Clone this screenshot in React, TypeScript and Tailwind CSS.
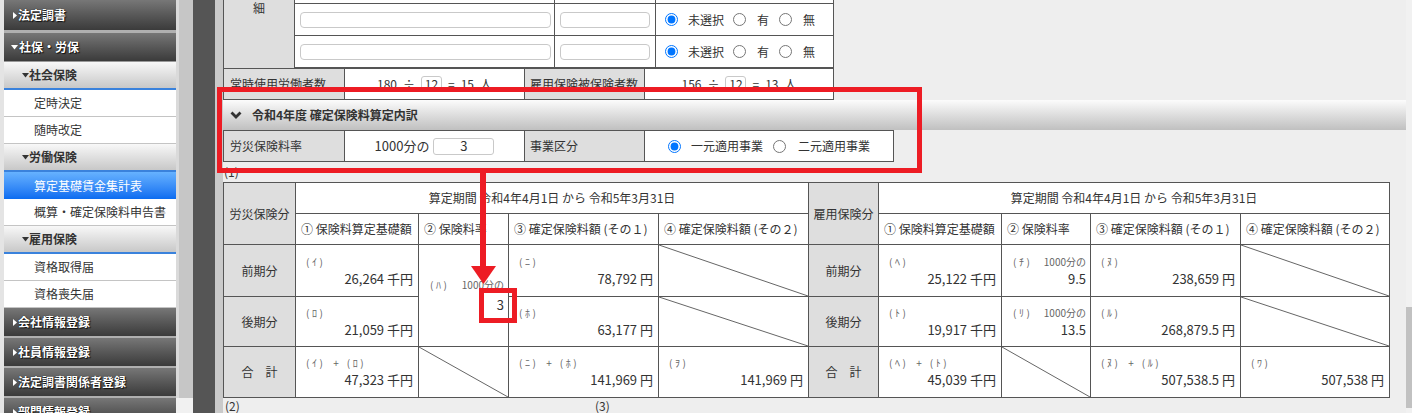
import React from "react";

function Tri({ down }: { down?: boolean }) {
  return down ? (
    <svg width="7" height="5" viewBox="0 0 7 5" className="shrink-0">
      <path d="M0 0H7L3.5 4.5Z" fill="currentColor" />
    </svg>
  ) : (
    <svg width="4" height="7" viewBox="0 0 4 7" className="shrink-0">
      <path d="M0 0L4 3.5L0 7Z" fill="currentColor" />
    </svg>
  );
}

function DarkHead({ label, open }: { label: string; open?: boolean }) {
  return (
    <div
      className={`flex h-[30px] shrink-0 items-center gap-[1px] border-b-2 border-[#b0b0b0] bg-linear-to-b from-[#777777] to-[#3b3b3b] text-[12px] font-bold leading-none text-white [text-shadow:0_0_1px_#000,1px_1px_1px_#111] ${
        open ? "pl-[7px]" : "pl-[9px]"
      }`}
    >
      <Tri down={open} />
      <span>{label}</span>
    </div>
  );
}

function SubHead({ label }: { label: string }) {
  return (
    <div className="flex h-[28px] shrink-0 items-center border-b-2 border-[#3a82dc] bg-linear-to-b from-[#f8f8f8] to-[#c8c8c8] pl-[18px] text-[12px] font-bold leading-none text-[#333]">
      <Tri down />
      <span>{label}</span>
    </div>
  );
}

function Item({ label, active }: { label: string; active?: boolean }) {
  return active ? (
    <div className="flex h-[27px] shrink-0 items-center bg-linear-to-b from-[#66b2ff] to-[#0a6cf0] pl-[30px] text-[12px] leading-none text-white">
      {label}
    </div>
  ) : (
    <div className="flex h-[27px] shrink-0 items-center border-b border-[#c4c4c4] bg-white pl-[30px] text-[12px] leading-none text-[#333]">
      {label}
    </div>
  );
}

function Sidebar() {
  return (
    <div className="flex w-[176px] shrink-0 overflow-hidden">
      <div className="w-[4px] bg-[#e4e4e4]" />
      <div className="flex w-[172px] flex-col">
        <div className="flex h-[33px] shrink-0 items-center gap-[1px] border-b-[3px] border-[#b0b0b0] bg-linear-to-b from-[#777777] to-[#3b3b3b] pl-[9px] text-[12px] font-bold leading-none text-white [text-shadow:0_0_1px_#000,1px_1px_1px_#111]">
          <Tri />
          <span>法定調書</span>
        </div>
        <div className="flex h-[29px] shrink-0 items-center gap-[1px] border-b border-[#999] bg-linear-to-b from-[#777777] to-[#3b3b3b] pl-[7px] text-[12px] font-bold leading-none text-white [text-shadow:0_0_1px_#000,1px_1px_1px_#111]">
          <Tri down />
          <span>社保・労保</span>
        </div>
        <SubHead label="社会保険" />
        <Item label="定時決定" />
        <Item label="随時改定" />
        <SubHead label="労働保険" />
        <Item label="算定基礎賃金集計表" active />
        <Item label="概算・確定保険料申告書" />
        <SubHead label="雇用保険" />
        <Item label="資格取得届" />
        <Item label="資格喪失届" />
        <DarkHead label="会社情報登録" />
        <DarkHead label="社員情報登録" />
        <DarkHead label="法定調書関係者登録" />
        <DarkHead label="部門情報登録" />
      </div>
    </div>
  );
}

function Radio({ on, name }: { on?: boolean; name: string }) {
  return <input type="radio" name={name} checked={!!on} readOnly className="m-0 h-[13px] w-[13px] shrink-0" />;
}

function DetailRow({ name }: { name: string }) {
  return (
    <div className="flex h-[32px] border-b border-[#555] bg-white">
      <div className="flex w-[260px] items-center border-r border-[#555] pl-[5px]">
        <div className="h-[16px] w-[251px] rounded-[4px] border border-[#c9c9c9] bg-white" />
      </div>
      <div className="flex w-[101px] items-center border-r border-[#555] pl-[5px]">
        <div className="h-[16px] w-[90px] rounded-[4px] border border-[#c9c9c9] bg-white" />
      </div>
      <div className="flex w-[178px] items-center border-r border-[#555] pl-[9px] text-[12px]">
        <Radio on name={name} />
        <span className="ml-[10px] mr-[9px]">未選択</span>
        <Radio name={name} />
        <span className="ml-[11px] mr-[10px]">有</span>
        <Radio name={name} />
        <span className="ml-[11px]">無</span>
      </div>
    </div>
  );
}

function Count({ total, n, wide }: { total: string; n: string; wide?: boolean }) {
  return (
    <div
      className={`flex items-center justify-center gap-[6px] border-r border-[#555] bg-white text-[12px] ${
        wide ? "w-[189px]" : "w-[180px]"
      }`}
    >
      <span>{total}</span>
      <span>÷</span>
      <span className="flex h-[16px] w-[21px] items-center justify-center rounded-[3px] border border-[#c9c9c9]">12</span>
      <span>=</span>
      <span>{n}</span>
      <span>人</span>
    </div>
  );
}

function TopTable() {
  return (
    <div className="h-[100px] shrink-0 overflow-hidden">
      <div className="-mt-[28px] flex w-[611px] border-l border-[#555]">
        <div className="flex w-[71px] flex-col items-center border-r border-[#555] bg-[#dedede] pt-[29px] text-[12px] leading-[14px]">
          <span>細</span>
        </div>
        <div className="flex flex-col">
          <DetailRow name="d0" />
          <DetailRow name="d1" />
          <DetailRow name="d2" />
        </div>
      </div>
      <div className="flex h-[32px] w-[611px] border-y border-l border-[#555] text-[12px]">
        <div className="flex w-[121px] items-center border-r border-[#555] bg-[#dedede] pl-[6px]">常時使用労働者数</div>
        <Count total="180" n="15" />
        <div className="flex w-[120px] items-center border-r border-[#555] bg-[#dedede] pl-[5px]">雇用保険被保険者数</div>
        <Count total="156" n="13" wide />
      </div>
    </div>
  );
}

function SectionHead() {
  return (
    <div className="flex h-[30px] shrink-0 items-center gap-[10px] bg-linear-to-b from-[#fcfcfc] to-[#c0c0c0] pl-[7px] text-[12px] font-bold text-[#333]">
      <svg width="12" height="8" viewBox="0 0 12 8">
        <path d="M1.5 1.5L6 6L10.5 1.5" fill="none" stroke="#333" strokeWidth="2.8" />
      </svg>
      <span>令和4年度 確定保険料算定内訳</span>
    </div>
  );
}

function RateRow() {
  return (
    <div className="flex h-[32px] w-[671px] shrink-0 border-y border-l border-[#555] text-[12px]">
      <div className="flex w-[121px] items-center border-r border-[#555] bg-[#dedede] pl-[6px]">労災保険料率</div>
      <div className="flex w-[180px] items-center justify-center gap-[4px] border-r border-[#555] bg-white">
        <span className="text-[13px]">1000分の</span>
        <span className="flex h-[17px] w-[61px] items-center justify-center rounded-[3px] border border-[#c9c9c9] text-[13px]">3</span>
      </div>
      <div className="flex w-[120px] items-center border-r border-[#555] bg-[#dedede] pl-[5px]">事業区分</div>
      <div className="flex w-[249px] items-center justify-center border-r border-[#555] bg-white">
        <Radio on name="jigyo" />
        <span className="ml-[10px] mr-[10px]">一元適用事業</span>
        <Radio name="jigyo" />
        <span className="ml-[12px]">二元適用事業</span>
      </div>
    </div>
  );
}

function Label({ children, tall }: { children: React.ReactNode; tall?: boolean }) {
  return (
    <div className={`flex items-center justify-center bg-[#dedede] text-[12px] ${tall ? "row-span-2" : ""}`}>
      {children}
    </div>
  );
}

function Head({ children }: { children: React.ReactNode }) {
  return <div className="flex items-center whitespace-nowrap bg-white pl-[5px] text-[12px]">{children}</div>;
}

function Period() {
  return (
    <div className="col-span-4 flex items-center justify-center bg-white text-[12px]">
      算定期間 令和4年4月1日 から 令和5年3月31日
    </div>
  );
}

function Sum({ a, b }: { a: string; b: string }) {
  return (
    <span>
      {a}
      <span className="mx-[8px] tracking-normal">+</span>
      {b}
    </span>
  );
}

function Val({ tag, value }: { tag: React.ReactNode; value: string }) {
  return (
    <div className="flex flex-col justify-center gap-[2px] bg-white pl-[10px] pr-[5px]">
      <div className="whitespace-nowrap text-[10px] leading-[14px] tracking-[2.5px] text-[#666]">{tag}</div>
      <div className="whitespace-nowrap text-right text-[13px] leading-[16px]">{value}</div>
    </div>
  );
}

function Rate({ tag, value, tall }: { tag: string; value: string; tall?: boolean }) {
  return (
    <div className={`flex flex-col justify-center bg-white pl-[11px] pr-[4px] ${tall ? "row-span-2 gap-[5px]" : "gap-[2px]"}`}>
      <div className="flex justify-between whitespace-nowrap text-[10px] leading-[14px] text-[#666]">
        <span className="tracking-[2.5px]">{tag}</span>
        <span>1000分の</span>
      </div>
      <div className="text-right text-[13px] leading-[16px]">{value}</div>
    </div>
  );
}

function Slash() {
  return (
    <div className="relative bg-white">
      <svg className="absolute inset-0 h-full w-full">
        <line x1="0" y1="0" x2="100%" y2="100%" stroke="#666" strokeWidth="1" />
      </svg>
    </div>
  );
}

function Tables() {
  return (
    <div className="grid w-[1167px] shrink-0 grid-cols-[71px_122px_89px_149px_149px_69px_122px_88px_149px_148px] grid-rows-[30px_30px_51px_49px_50px] gap-px border border-[#555] bg-[#555] text-[#333]">
      <Label tall>労災保険分</Label>
      <Period />
      <Label tall>雇用保険分</Label>
      <Period />

      <Head>① 保険料算定基礎額</Head>
      <Head>② 保険料率</Head>
      <Head>③ 確定保険料額 (その１)</Head>
      <Head>④ 確定保険料額 (その２)</Head>
      <Head>① 保険料算定基礎額</Head>
      <Head>② 保険料率</Head>
      <Head>③ 確定保険料額 (その１)</Head>
      <Head>④ 確定保険料額 (その２)</Head>

      <Label>前期分</Label>
      <Val tag="(ｲ)" value="26,264 千円" />
      <Rate tag="(ﾊ)" value="3" tall />
      <Val tag="(ﾆ)" value="78,792 円" />
      <Slash />
      <Label>前期分</Label>
      <Val tag="(ﾍ)" value="25,122 千円" />
      <Rate tag="(ﾁ)" value="9.5" />
      <Val tag="(ﾇ)" value="238,659 円" />
      <Slash />

      <Label>後期分</Label>
      <Val tag="(ﾛ)" value="21,059 千円" />
      <Val tag="(ﾎ)" value="63,177 円" />
      <Slash />
      <Label>後期分</Label>
      <Val tag="(ﾄ)" value="19,917 千円" />
      <Rate tag="(ﾘ)" value="13.5" />
      <Val tag="(ﾙ)" value="268,879.5 円" />
      <Slash />

      <Label>合　計</Label>
      <Val tag={<Sum a="(ｲ)" b="(ﾛ)" />} value="47,323 千円" />
      <Slash />
      <Val tag={<Sum a="(ﾆ)" b="(ﾎ)" />} value="141,969 円" />
      <Val tag="(ｦ)" value="141,969 円" />
      <Label>合　計</Label>
      <Val tag={<Sum a="(ﾍ)" b="(ﾄ)" />} value="45,039 千円" />
      <Slash />
      <Val tag={<Sum a="(ﾇ)" b="(ﾙ)" />} value="507,538.5 円" />
      <Val tag="(ﾜ)" value="507,538 円" />
    </div>
  );
}

export default function App() {
  return (
    <div className="relative flex h-[413px] w-[1412px] overflow-hidden bg-[#eeeeee] font-['Noto_Sans_CJK_JP',sans-serif] text-[#333]">
      <Sidebar />
      <div className="flex w-[17px] shrink-0 flex-col">
        <div className="h-[398px] border-l-[3px] border-[#dadada] bg-[#c6c6c6]" />
        <div className="flex-1 bg-[#f1f1f1]" />
      </div>
      <div className="w-[22px] shrink-0 bg-[#555]" />
      <div className="w-[8px] shrink-0 bg-[#cacaca]" />

      <main className="flex min-w-0 flex-1 flex-col">
        <TopTable />
        <SectionHead />
        <RateRow />
        <div className="h-[20px] shrink-0 pl-[1px] text-[12px] leading-[20px]">(1)</div>
        <Tables />
        <div className="flex shrink-0 pl-[2px] text-[12px] leading-[16px]">
          <span className="w-[370px]">(2)</span>
          <span>(3)</span>
        </div>
      </main>

      <div className="flex w-[6px] shrink-0 flex-col bg-[#f1f1f1]">
        <div className="h-[307px]" />
        <div className="h-[101px] bg-[#c1c1c1]" />
      </div>

      {/* red annotations drawn over the page */}
      <div className="pointer-events-none absolute left-[217px] top-[87px] h-[86px] w-[705px] border-[5px] border-[#ed1c24]" />
      <div className="pointer-events-none absolute left-[480px] top-[172px] h-[96px] w-[6px] bg-[#ed1c24]" />
      <svg className="pointer-events-none absolute left-[471px] top-[266px]" width="25" height="19" viewBox="0 0 25 19">
        <path d="M0 0H25L12.5 18Z" fill="#ed1c24" />
      </svg>
      <div className="pointer-events-none absolute left-[479px] top-[288px] h-[35px] w-[38px] border-[5px] border-[#ed1c24]" />
    </div>
  );
}
